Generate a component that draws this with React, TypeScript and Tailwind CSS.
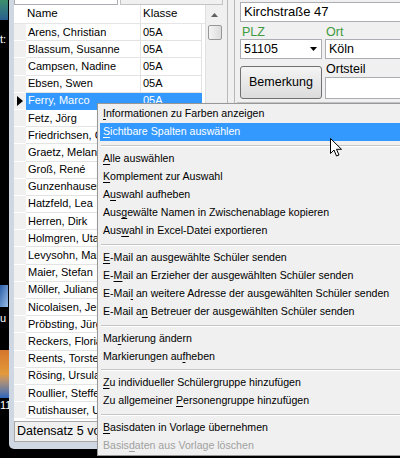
import React from "react";

type MenuEntry =
  | { sep: true; h?: number }
  | { sep?: false; label: string; u: number; active?: boolean; disabled?: boolean };

const names = [
  "Arens, Christian",
  "Blassum, Susanne",
  "Campsen, Nadine",
  "Ebsen, Swen",
  "Ferry, Marco",
  "Fetz, Jörg",
  "Friedrichsen, Clara",
  "Graetz, Melanie",
  "Groß, René",
  "Gunzenhauser, Tim",
  "Hatzfeld, Lea",
  "Herren, Dirk",
  "Holmgren, Uta",
  "Levysohn, Maria",
  "Maier, Stefan",
  "Möller, Juliane",
  "Nicolaisen, Jens",
  "Pröbsting, Jürgen",
  "Reckers, Florian",
  "Reents, Torsten",
  "Rösing, Ursula",
  "Roullier, Steffen",
  "Rutishauser, Uwe",
];

const SELECTED = 4;

const menu: MenuEntry[] = [
  { label: "Informationen zu Farben anzeigen", u: 0 },
  { label: "Sichtbare Spalten auswählen", u: 0, active: true },
  { sep: true },
  { label: "Alle auswählen", u: 0 },
  { label: "Komplement zur Auswahl", u: 0 },
  { label: "Auswahl aufheben", u: 1 },
  { label: "Ausgewälte Namen in Zwischenablage kopieren", u: 3 },
  { label: "Auswahl in Excel-Datei exportieren", u: 3 },
  { sep: true },
  { label: "E-Mail an ausgewählte Schüler senden", u: 0 },
  { label: "E-Mail an Erzieher der ausgewählten Schüler senden", u: 2 },
  { label: "E-Mail an weitere Adresse der ausgewählten Schüler senden", u: 5 },
  { label: "E-Mail an Betreuer der ausgewählten Schüler senden", u: 8 },
  { sep: true },
  { label: "Markierung ändern", u: 2 },
  { label: "Markierungen aufheben", u: 15 },
  { sep: true, h: 8 },
  { label: "Zu individueller Schülergruppe hinzufügen", u: 0 },
  { label: "Zu allgemeiner Personengruppe hinzufügen", u: 15 },
  { sep: true },
  { label: "Basisdaten in Vorlage übernehmen", u: 0 },
  { label: "Basisdaten aus Vorlage löschen", u: 5, disabled: true },
];

const font = { fontFamily: '"Liberation Sans", Arial, sans-serif' };

function Mnemonic({ label, u }: { label: string; u: number }) {
  // one span so the spaces around the underlined letter survive
  return (
    <span className="whitespace-pre">
      {label.slice(0, u)}
      <span className="underline underline-offset-2">{label.charAt(u)}</span>
      {label.slice(u + 1)}
    </span>
  );
}

function ContextMenu() {
  return (
    <div className="absolute left-[97px] top-[103px] w-[320px] border border-[#979797] bg-[#f0f0f0] pt-[1px] pl-[2px] shadow-[2px_2px_3px_rgba(0,0,0,0.35)]">
      {menu.map((m, i) =>
        m.sep ? (
          <div key={i} className={(m.h === 8 ? "h-[8px]" : "h-[9px]") + " flex flex-col justify-center pl-[1px]"}>
            <div className="h-px bg-[#c5c5c5]" />
            <div className="h-px bg-white" />
          </div>
        ) : (
          <div
            key={i}
            className={
              "h-[18px] flex items-center pl-[3px] text-[10.6px] whitespace-nowrap " +
              (m.active ? "bg-[#3399ff] text-white" : m.disabled ? "text-[#a0a0a0]" : "text-black")
            }
          >
            <Mnemonic label={m.label} u={m.u} />
          </div>
        )
      )}
    </div>
  );
}

function Cursor() {
  return (
    <svg className="absolute left-[330px] top-[138px]" width="13" height="20" viewBox="0 0 13 20">
      <path
        d="M0.5 0.5 L0.5 15.5 L4 12 L6.5 18 L9 17 L6.5 11.3 L11.5 11.3 Z"
        fill="white"
        stroke="black"
        strokeWidth="1"
        strokeLinejoin="miter"
      />
    </svg>
  );
}

function Desktop() {
  // bits of desktop icons peeking out on the left edge
  return (
    <div className="absolute left-0 top-0 w-[10px] h-[458px] bg-black">
      <div className="absolute left-0 top-0 w-[8px] h-[20px] bg-gradient-to-b from-[#3e8f6a] to-[#2b5f8f]" />
      <div className="absolute left-0 top-[34px] text-[11px] text-white leading-none">t:</div>
      <div className="absolute left-0 top-[285px] w-[8px] h-[22px] bg-gradient-to-br from-[#2a5ea8] to-[#9bbde6]" />
      <div className="absolute left-0 top-[313px] text-[11px] text-white leading-none">u</div>
      <div className="absolute left-0 top-[350px] w-[9px] h-[48px] bg-gradient-to-b from-[#d4762c] via-[#e39a3b] to-[#2a64b8]" />
      <div className="absolute left-0 top-[400px] text-[11px] text-white leading-none">11</div>
    </div>
  );
}

function Grid() {
  return (
    <div className="flex flex-col w-[209px] h-full bg-white">
      {/* top edge of the search boxes */}
      <div className="flex h-[5px] shrink-0">
        <div className="w-[104px] bg-white border border-t-0 border-[#abadb3]" />
        <div className="w-[2px]" />
        <div className="flex-1 bg-[#f0f0f0] border border-t-0 border-[#c3c3c3]" />
      </div>
      <div className="flex flex-1">
        <div className="w-[191px] flex flex-col">
          {/* header */}
          <div className="flex h-[19px] text-[11.5px] items-center bg-white border-b border-[#e5e5e5]">
            <div className="w-[12px] h-full" />
            <div className="w-[115px] pl-[1px] h-full flex items-center border-r border-[#e5e5e5]">Name</div>
            <div className="flex-1 pl-[2px]">Klasse</div>
          </div>
          {names.map((n, i) => {
            const sel = i === SELECTED;
            return (
              <div key={n} className="flex h-[17.2px] text-[11px] leading-none">
                <div className="w-[12px] bg-[#f0f0f0] border-b border-white flex items-center justify-center">
                  {sel ? (
                    <svg width="6" height="10" viewBox="0 0 6 10">
                      <path d="M0 0 L6 5 L0 10 Z" fill="black" />
                    </svg>
                  ) : null}
                </div>
                <div
                  className={
                    "w-[115px] pl-[2px] flex items-center overflow-hidden whitespace-nowrap border-r border-b " +
                    (sel ? "bg-[#3399ff] text-white border-[#3399ff]" : "border-[#e3e3e3]")
                  }
                >
                  {n}
                </div>
                <div
                  className={
                    "w-[61px] pl-[2px] flex items-center border-r border-b " +
                    (sel ? "bg-[#3399ff] text-white border-[#3399ff]" : "border-[#e3e3e3]")
                  }
                >
                  05A
                </div>
              </div>
            );
          })}
        </div>
        {/* scrollbar */}
        <div className="w-[18px] bg-[#f0f0f0] border-l border-[#e0e0e0] flex flex-col items-center">
          <div className="h-[20px] flex items-center justify-center">
            <svg width="7" height="4" viewBox="0 0 7 4">
              <path d="M0 4 L3.5 0 L7 4 Z" fill="#606060" />
            </svg>
          </div>
          <div className="w-[14px] h-[15px] rounded-[2px] border border-[#979797] bg-gradient-to-r from-[#f4f4f4] to-[#dcdcdc]" />
        </div>
      </div>
      {/* status bar */}
      <div className="h-[21px] shrink-0 bg-[#f0f0f0] border border-[#a8a8a8] flex items-center pl-[2px] text-[12.5px]">
        Datensatz 5 von 23
      </div>
    </div>
  );
}

function Input({ children, className }: { children?: React.ReactNode; className?: string }) {
  return (
    <div className={"bg-white border border-[#abadb3] flex items-center pl-[3px] text-[12.5px] " + (className ?? "")}>
      {children}
    </div>
  );
}

function Details() {
  return (
    <div className="flex-1 bg-[#f0f0f0] flex flex-col">
      <div className="pl-[3px] pt-[2px] flex flex-col">
        <Input className="h-[20px] text-[13px]">Kirchstraße 47</Input>
        <div className="flex gap-[3px] mt-[1px]">
          <div className="w-[82px] flex flex-col">
            <div className="h-[16px] text-[12.5px] text-[#3f9a3f] leading-none flex items-end pl-[2px] pb-[1px]">PLZ</div>
            <Input className="h-[20px] justify-between pr-[4px]">
              51105
              <svg width="7" height="4" viewBox="0 0 7 4">
                <path d="M0 0 L7 0 L3.5 4 Z" fill="black" />
              </svg>
            </Input>
            <div className="mt-[7px] h-[33px] shrink-0 rounded-[3px] border border-[#707070] bg-gradient-to-b from-[#f4f4f4] to-[#dcdcdc] flex items-center justify-center text-[12.5px]">
              Bemerkung
            </div>
          </div>
          <div className="flex-1 flex flex-col">
            <div className="h-[16px] text-[12.5px] text-[#3f9a3f] leading-none flex items-end pl-[1px] pb-[1px]">Ort</div>
            <Input className="h-[20px]">Köln</Input>
            <div className="h-[18px] text-[12.5px] leading-none flex items-end pl-[1px] pb-[2px]">Ortsteil</div>
            <Input className="h-[22px]" />
          </div>
        </div>
      </div>
      <div className="mt-[3px] border-t border-[#c8c8c8]" />
    </div>
  );
}

export default function App() {
  return (
    <div className="relative w-[400px] h-[458px] overflow-hidden bg-black text-black" style={font}>
      <Desktop />
      {/* window frame */}
      <div className="absolute left-[9px] top-0 w-[400px] h-[449px] bg-[#cfd8e2] rounded-bl-[5px] pl-[5px] pb-[6px] flex">
        <div className="flex flex-1 h-[442px]">
          <Grid />
          {/* splitter */}
          <div className="w-[14px] bg-[#f0f0f0] flex justify-center gap-[6px] pl-[2px]">
            <div className="w-px bg-[#b8b8b8]" />
            <div className="w-px bg-[#b8b8b8]" />
          </div>
          <Details />
        </div>
      </div>
      <ContextMenu />
      <Cursor />
    </div>
  );
}
